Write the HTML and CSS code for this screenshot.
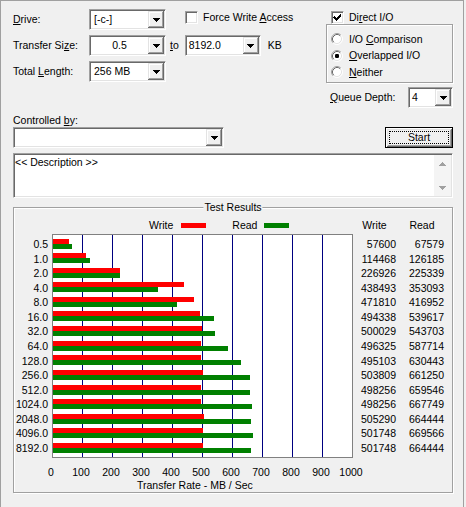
FILE: index.html
```html
<!DOCTYPE html>
<html>
<head>
<meta charset="utf-8">
<title>ATTO Disk Benchmark</title>
<link rel="stylesheet" href="styles.css">
</head>
<body>
<div class="window">
  <div class="content">
    <div class="top">
      <div class="left-col">
        <div class="frow">
          <span class="lbl"><u>D</u>rive:</span>
          <div class="combo w77"><span class="val pad3">[-c-]</span><span class="ddb"><svg width="7" height="4" viewBox="0 0 7 4"><path d="M0 0h7v1h-1v1h-1v1h-1v1h-1v-1h-1v-1h-1v-1h-1z" fill="#000"/></svg></span></div>
          <div class="check force"><span class="cbox"></span><span>Force Write <u>A</u>ccess</span></div>
        </div>
        <div class="frow">
          <span class="lbl">Transfer Si<u>z</u>e:</span>
          <div class="combo w77"><span class="val center">0.5</span><span class="ddb"><svg width="7" height="4" viewBox="0 0 7 4"><path d="M0 0h7v1h-1v1h-1v1h-1v1h-1v-1h-1v-1h-1v-1h-1z" fill="#000"/></svg></span></div>
          <span class="to"><u>t</u>o</span>
          <div class="combo w76"><span class="val pad2">8192.0</span><span class="ddb"><svg width="7" height="4" viewBox="0 0 7 4"><path d="M0 0h7v1h-1v1h-1v1h-1v1h-1v-1h-1v-1h-1v-1h-1z" fill="#000"/></svg></span></div>
          <span class="kb">KB</span>
        </div>
        <div class="frow">
          <span class="lbl">Total <u>L</u>ength:</span>
          <div class="combo w77"><span class="val pad3">256 MB</span><span class="ddb"><svg width="7" height="4" viewBox="0 0 7 4"><path d="M0 0h7v1h-1v1h-1v1h-1v1h-1v-1h-1v-1h-1v-1h-1z" fill="#000"/></svg></span></div>
        </div>
      </div>
      <div class="right-col">
        <div class="check direct">
          <span class="cbox"><svg width="9" height="9" viewBox="0 0 9 9"><path d="M1 3h1v1h1v1h1v-1h1v-1h1v-1h1v-1h1v3h-1v1h-1v1h-1v1h-1v1h-1v-1h-1v-1h-1v-1h-1z" fill="#000"/></svg></span>
          <span>Di<u>r</u>ect I/O</span>
        </div>
        <div class="radiogroup">
          <div class="radio"><svg class="rad" width="12" height="12" viewBox="0 0 12 12"><circle cx="6" cy="6" r="5" fill="#fff"/><path d="M2.11 9.89A5.5 5.5 0 0 1 9.89 2.11" fill="none" stroke="#a0a0a0"/><path d="M9.89 2.11A5.5 5.5 0 0 1 2.11 9.89" fill="none" stroke="#fff"/><path d="M2.82 9.18A4.5 4.5 0 0 1 9.18 2.82" fill="none" stroke="#696969"/><path d="M9.18 2.82A4.5 4.5 0 0 1 2.82 9.18" fill="none" stroke="#e3e3e3"/></svg><span>I/O <u>C</u>omparison</span></div>
          <div class="radio"><svg class="rad" width="12" height="12" viewBox="0 0 12 12"><circle cx="6" cy="6" r="5" fill="#fff"/><path d="M2.11 9.89A5.5 5.5 0 0 1 9.89 2.11" fill="none" stroke="#a0a0a0"/><path d="M9.89 2.11A5.5 5.5 0 0 1 2.11 9.89" fill="none" stroke="#fff"/><path d="M2.82 9.18A4.5 4.5 0 0 1 9.18 2.82" fill="none" stroke="#696969"/><path d="M9.18 2.82A4.5 4.5 0 0 1 2.82 9.18" fill="none" stroke="#e3e3e3"/><rect x="4" y="4" width="4" height="4" rx="1.2" fill="#000"/></svg><span><u>O</u>verlapped I/O</span></div>
          <div class="radio"><svg class="rad" width="12" height="12" viewBox="0 0 12 12"><circle cx="6" cy="6" r="5" fill="#fff"/><path d="M2.11 9.89A5.5 5.5 0 0 1 9.89 2.11" fill="none" stroke="#a0a0a0"/><path d="M9.89 2.11A5.5 5.5 0 0 1 2.11 9.89" fill="none" stroke="#fff"/><path d="M2.82 9.18A4.5 4.5 0 0 1 9.18 2.82" fill="none" stroke="#696969"/><path d="M9.18 2.82A4.5 4.5 0 0 1 2.82 9.18" fill="none" stroke="#e3e3e3"/></svg><span><u>N</u>either</span></div>
        </div>
        <div class="qrow">
          <span class="qlbl"><u>Q</u>ueue Depth:</span>
          <div class="combo w45"><span class="val pad2">4</span><span class="ddb"><svg width="7" height="4" viewBox="0 0 7 4"><path d="M0 0h7v1h-1v1h-1v1h-1v1h-1v-1h-1v-1h-1v-1h-1z" fill="#000"/></svg></span></div>
        </div>
      </div>
    </div>

    <div class="ctl-lbl">Controlled <u>b</u>y:</div>
    <div class="crow">
      <div class="combo w211"><span class="val"></span><span class="ddb"><svg width="7" height="4" viewBox="0 0 7 4"><path d="M0 0h7v1h-1v1h-1v1h-1v1h-1v-1h-1v-1h-1v-1h-1z" fill="#000"/></svg></span></div>
      <div class="start"><span class="focus">Start</span></div>
    </div>

    <div class="desc">
      <div class="desc-text">&lt;&lt; Description &gt;&gt;</div>
      <div class="vscroll">
        <span class="sbtn"><svg width="7" height="4" viewBox="0 0 7 4"><path d="M3 0h1v1h1v1h1v1h1v1h-7v-1h1v-1h1v-1h1z" fill="#a0a0a0"/></svg></span>
        <span class="sbtn"><svg width="7" height="4" viewBox="0 0 7 4"><path d="M0 0h7v1h-1v1h-1v1h-1v1h-1v-1h-1v-1h-1v-1h-1z" fill="#a0a0a0"/></svg></span>
      </div>
    </div>

    <div class="results">
      <span class="gtitle">Test Results</span>
      <div class="chart">
        <div class="lspacer"></div>
        <div class="legend">
          <span>Write</span><span class="sw sw-w"></span>
          <span class="lread">Read</span><span class="sw sw-r"></span>
        </div>
        <div class="hdr">Write</div>
        <div class="hdr hdr-read">Read</div>

        <div class="ylabels">
          <div>0.5</div><div>1.0</div><div>2.0</div><div>4.0</div><div>8.0</div>
          <div>16.0</div><div>32.0</div><div>64.0</div><div>128.0</div><div>256.0</div>
          <div>512.0</div><div>1024.0</div><div>2048.0</div><div>4096.0</div><div>8192.0</div>
        </div>
        <div class="ygap"></div>
        <svg class="plot" width="301" height="260" viewBox="0 0 301 260">
          <rect x="0.5" y="0.5" width="300" height="223" fill="#fff" stroke="#808080"/>
          <g stroke="#000080" stroke-width="1">
            <path d="M30.5 1V223M60.5 1V223M90.5 1V223M120.5 1V223M150.5 1V223M180.5 1V223M210.5 1V223M240.5 1V223M270.5 1V223"/>
          </g>
          <g fill="#ff0000">
            <rect x="1" y="5" width="16" height="5"/>
            <rect x="1" y="19" width="33" height="5"/>
            <rect x="1" y="34" width="67" height="5"/>
            <rect x="1" y="48" width="131" height="5"/>
            <rect x="1" y="63" width="141" height="5"/>
            <rect x="1" y="77" width="147" height="5"/>
            <rect x="1" y="92" width="149" height="5"/>
            <rect x="1" y="107" width="148" height="5"/>
            <rect x="1" y="121" width="148" height="5"/>
            <rect x="1" y="136" width="150" height="5"/>
            <rect x="1" y="151" width="148" height="5"/>
            <rect x="1" y="165" width="148" height="5"/>
            <rect x="1" y="180" width="151" height="5"/>
            <rect x="1" y="194" width="150" height="5"/>
            <rect x="1" y="209" width="150" height="5"/>
          </g>
          <g fill="#008000">
            <rect x="1" y="10" width="19" height="5"/>
            <rect x="1" y="24" width="37" height="5"/>
            <rect x="1" y="39" width="67" height="5"/>
            <rect x="1" y="53" width="105" height="5"/>
            <rect x="1" y="68" width="124" height="5"/>
            <rect x="1" y="82" width="161" height="5"/>
            <rect x="1" y="97" width="162" height="5"/>
            <rect x="1" y="112" width="175" height="5"/>
            <rect x="1" y="126" width="188" height="5"/>
            <rect x="1" y="141" width="197" height="5"/>
            <rect x="1" y="156" width="197" height="5"/>
            <rect x="1" y="170" width="199" height="5"/>
            <rect x="1" y="185" width="198" height="5"/>
            <rect x="1" y="199" width="200" height="5"/>
            <rect x="1" y="214" width="198" height="5"/>
          </g>
          <g class="axis" text-anchor="middle">
            <text x="-1" y="241.5">0</text>
            <text x="29" y="241.5">100</text>
            <text x="59" y="241.5">200</text>
            <text x="89" y="241.5">300</text>
            <text x="119" y="241.5">400</text>
            <text x="149" y="241.5">500</text>
            <text x="179" y="241.5">600</text>
            <text x="209" y="241.5">700</text>
            <text x="239" y="241.5">800</text>
            <text x="269" y="241.5">900</text>
            <text x="299" y="241.5">1000</text>
          </g>
          <text class="axis" x="85" y="255">Transfer Rate - MB / Sec</text>
        </svg>
        <div class="nums">
          <div>57600</div><div>114468</div><div>226926</div><div>438493</div><div>471810</div>
          <div>494338</div><div>500029</div><div>496325</div><div>495103</div><div>503809</div>
          <div>498256</div><div>498256</div><div>505290</div><div>501748</div><div>501748</div>
        </div>
        <div class="nums">
          <div>67579</div><div>126185</div><div>225339</div><div>353093</div><div>416952</div>
          <div>539617</div><div>543703</div><div>587714</div><div>630443</div><div>661250</div>
          <div>659546</div><div>667749</div><div>664444</div><div>669566</div><div>664444</div>
        </div>
      </div>
    </div>
  </div>
</div>
</body>
</html>
```

FILE: styles.css
```css
* { box-sizing: border-box; }
html, body { margin: 0; padding: 0; }
body {
  width: 466px;
  height: 507px;
  overflow: hidden;
  background: #f0f0f0;
  font-family: "Liberation Sans", Arial, sans-serif;
  font-size: 10.5px;
  line-height: 13px;
  color: #000;
}
u { text-decoration: underline; text-underline-offset: 1px; }

.window {
  width: 464px;
  height: 507px;
  border-left: 1px solid #a0a0a0;
  border-top: 1px solid #a0a0a0;
  border-right: 1px solid #a0a0a0;
  padding: 8px 0 0 12px;
}
.content { width: 440px; }

.top { display: flex; height: 99px; }
.left-col { width: 313px; }
.right-col { width: 127px; }

.frow { display: flex; align-items: center; height: 21px; margin-bottom: 5px; }
.lbl { width: 76px; }

/* sunken combo box */
.combo {
  height: 21px;
  display: flex;
  padding: 1px;
  background: #fff;
  border: 1px solid;
  border-color: #a0a0a0 #fff #fff #a0a0a0;
  box-shadow: inset 1px 1px 0 #696969, inset -1px -1px 0 #e3e3e3;
}
.w77 { width: 77px; }
.w76 { width: 76px; }
.w45 { width: 45px; }
.w211 { width: 211px; }
.val { flex: 1; line-height: 17px; white-space: nowrap; overflow: hidden; }
.pad3 { padding-left: 3px; }
.pad2 { padding-left: 2px; }
.center { text-align: center; }
.ddb {
  width: 16px;
  height: 17px;
  background: #f0f0f0;
  display: flex;
  align-items: center;
  justify-content: center;
  box-shadow: inset -1px -1px 0 #696969, inset 1px 1px 0 #e3e3e3, inset -2px -2px 0 #a0a0a0, inset 2px 2px 0 #fff;
}
.ddb svg { display: block; shape-rendering: crispEdges; margin-top: 1px; }

.to { margin-left: 4px; margin-right: 6px; }
.kb { margin-left: 7px; }

/* checkbox */
.check { display: flex; align-items: center; gap: 5px; height: 13px; }
.force { align-self: flex-start; margin-top: 2px; margin-left: 19px; }
.cbox {
  width: 13px;
  height: 13px;
  flex: none;
  background: #fff;
  border: 1px solid;
  border-color: #a0a0a0 #fff #fff #a0a0a0;
  box-shadow: inset 1px 1px 0 #696969, inset -1px -1px 0 #e3e3e3;
  display: flex;
  align-items: center;
  justify-content: center;
}
.cbox svg { display: block; shape-rendering: crispEdges; }
.direct { margin-top: 2px; margin-bottom: 0; padding-left: 5px; height: 13px; }

/* etched group */
.radiogroup {
  margin-top: 0;
  height: 59px;
  border: 1px solid #a0a0a0;
  box-shadow: inset 1px 1px 0 #fff, 1px 1px 0 #fff;
  padding: 6px 0 0 4px;
}
.radio { display: flex; align-items: center; gap: 6px; height: 16.5px; }
.rad { display: block; flex: none; }

.qrow { display: flex; align-items: center; margin-top: 4px; height: 21px; }
.qlbl { padding-left: 4px; }
.qrow .combo { margin-left: auto; }

.ctl-lbl { margin-top: 6px; height: 13px; }
.crow { display: flex; justify-content: space-between; height: 21px; }

/* default push button */
.start {
  width: 68px;
  height: 21px;
  border: 1px solid #000;
  background: #f0f0f0;
  box-shadow: inset 1px 1px 0 #fff, inset -1px -1px 0 #696969, inset 2px 2px 0 #e3e3e3, inset -2px -2px 0 #a0a0a0;
  padding: 3px;
  display: flex;
}
.focus {
  flex: 1;
  border: 1px dotted #000;
  text-align: center;
  line-height: 11px;
}

/* description edit */
.desc {
  margin-top: 5px;
  height: 45px;
  display: flex;
  padding: 1px;
  background: #fff;
  border: 1px solid;
  border-color: #a0a0a0 #fff #fff #a0a0a0;
  box-shadow: inset 1px 1px 0 #696969, inset -1px -1px 0 #e3e3e3;
}
.desc-text { flex: 1; padding-top: 1px; }
.vscroll {
  width: 17px;
  background: #f4f4f4;
  display: flex;
  flex-direction: column;
  justify-content: space-between;
}
.sbtn { height: 17px; display: flex; align-items: center; justify-content: center; }
.sbtn svg { display: block; shape-rendering: crispEdges; }

/* results group */
.results {
  position: relative;
  margin-top: 9px;
  height: 286px;
  border: 1px solid #a0a0a0;
  box-shadow: inset 1px 1px 0 #fff, 1px 1px 0 #fff;
  padding-top: 9px;
}
.gtitle {
  position: absolute;
  top: -7px;
  left: 50%;
  transform: translateX(-50%);
  background: #f0f0f0;
  padding: 0 1px;
  white-space: nowrap;
}
.chart {
  display: grid;
  grid-template-columns: 34px 4px 301px 43px 48px;
  grid-template-rows: 17px auto;
}
.lspacer { grid-column: span 2; }
.legend { display: flex; align-items: center; padding-left: 97px; }
.sw { width: 25px; height: 5px; margin-left: 8px; }
.sw-w { background: #ff0000; }
.sw-r { background: #008000; margin-left: 7px; }
.lread { margin-left: 26px; }
.hdr { text-align: center; line-height: 17px; }
.hdr-read { padding-left: 4px; }

.ylabels, .nums { padding-top: 3px; }
.ylabels div, .nums div { height: 14.57px; line-height: 14.57px; text-align: right; white-space: nowrap; }
.plot { display: block; overflow: visible; }
.axis { font-family: "Liberation Sans", Arial, sans-serif; font-size: 10.5px; fill: #000; }
```
